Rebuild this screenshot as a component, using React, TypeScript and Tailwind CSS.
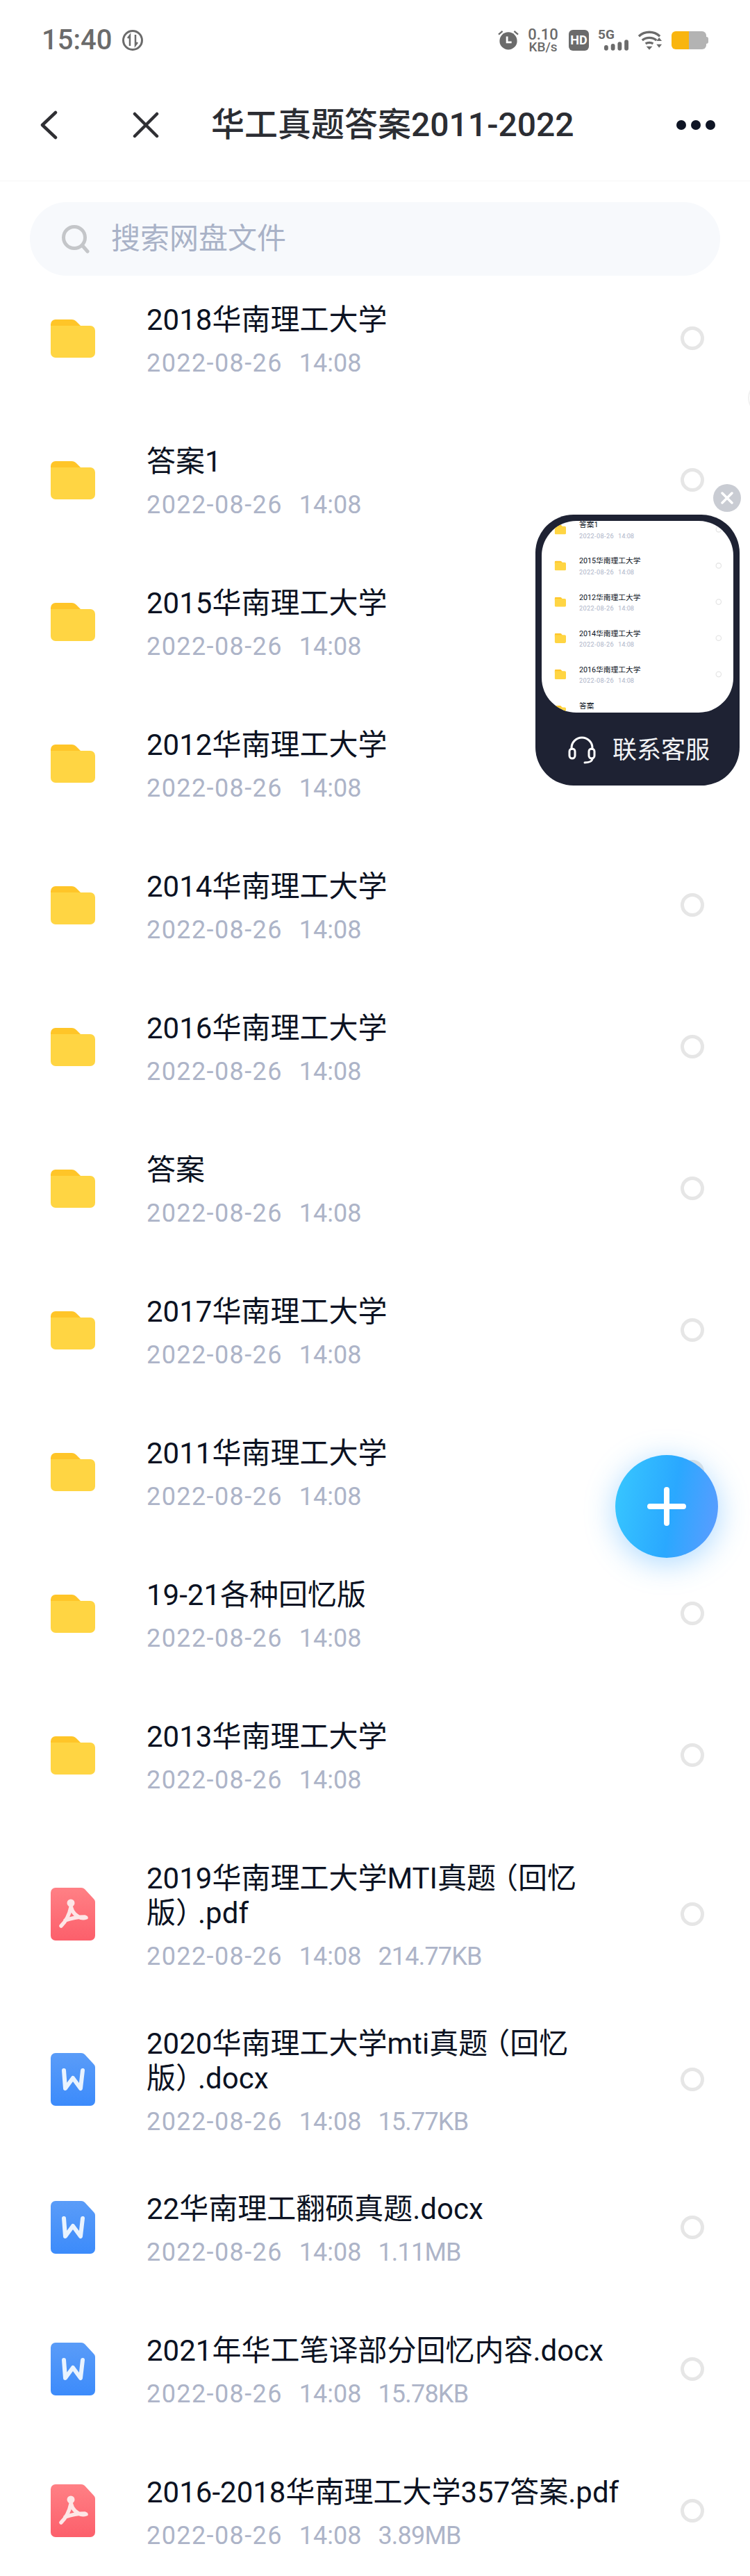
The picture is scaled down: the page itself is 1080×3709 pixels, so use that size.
const SANS = "font-['Roboto','Noto_Sans_CJK_SC',sans-serif]";

type Kind = "folder" | "pdf" | "word";

interface Item {
  kind: Kind;
  name: string;
  size?: string;
}

const items: Item[] = [
  { kind: "folder", name: "2018华南理工大学" },
  { kind: "folder", name: "答案1" },
  { kind: "folder", name: "2015华南理工大学" },
  { kind: "folder", name: "2012华南理工大学" },
  { kind: "folder", name: "2014华南理工大学" },
  { kind: "folder", name: "2016华南理工大学" },
  { kind: "folder", name: "答案" },
  { kind: "folder", name: "2017华南理工大学" },
  { kind: "folder", name: "2011华南理工大学" },
  { kind: "folder", name: "19-21各种回忆版" },
  { kind: "folder", name: "2013华南理工大学" },
  { kind: "pdf", name: "2019华南理工大学MTI真题（回忆\n版）.pdf", size: "214.77KB" },
  { kind: "word", name: "2020华南理工大学mti真题（回忆\n版）.docx", size: "15.77KB" },
  { kind: "word", name: "22华南理工翻硕真题.docx", size: "1.11MB" },
  { kind: "word", name: "2021年华工笔译部分回忆内容.docx", size: "15.78KB" },
  { kind: "pdf", name: "2016-2018华南理工大学357答案.pdf", size: "3.89MB" },
];

function FolderIcon() {
  return (
    <svg width="64" height="55" viewBox="0 0 64 55" className="shrink-0">
      <path d="M0 7a7 7 0 0 1 7-7h23c3 0 5 1 7 3l6 6v8H0z" fill="#ffc528" />
      <path d="M0 9h57a7 7 0 0 1 7 7v32a7 7 0 0 1-7 7H7a7 7 0 0 1-7-7z" fill="#ffd543" />
    </svg>
  );
}

function PdfIcon() {
  return (
    <svg width="64" height="76" viewBox="0 0 64 76" className="shrink-0">
      <defs>
        <linearGradient id="pdfFill" x1="0" y1="0" x2="0" y2="1">
          <stop offset="0" stopColor="#ff8085" />
          <stop offset="1" stopColor="#fc5f6b" />
        </linearGradient>
      </defs>
      <path
        d="M0 7a7 7 0 0 1 7-7h37c2 0 3.500.7 5 2l12 13c2 2 3 3.500 3 6v48a7 7 0 0 1-7 7H7a7 7 0 0 1-7-7z"
        fill="url(#pdfFill)"
      />
      <circle cx="29" cy="22" r="5.500" fill="#fde6e6" />
      <path
        d="M29 22c-1 8 4 16 11 20 4 2 8 2 11 1M29 28c-2 10-7 20-14 27M21 47c8-3 16-5 28-5"
        fill="none"
        stroke="#fde6e6"
        strokeWidth="5.500"
        strokeLinecap="round"
      />
    </svg>
  );
}

function WordIcon() {
  return (
    <svg width="64" height="76" viewBox="0 0 64 76" className="shrink-0">
      <defs>
        <linearGradient id="wordFill" x1="0" y1="0" x2="0" y2="1">
          <stop offset="0" stopColor="#5a9cf8" />
          <stop offset="1" stopColor="#3c8bfb" />
        </linearGradient>
      </defs>
      <path
        d="M0 7a7 7 0 0 1 7-7h37c2 0 3.500.7 5 2l12 13c2 2 3 3.500 3 6v48a7 7 0 0 1-7 7H7a7 7 0 0 1-7-7z"
        fill="url(#wordFill)"
      />
      <path
        d="M19 25l2 26 11-15 11 15 3-26"
        fill="none"
        stroke="#e9f3fe"
        strokeWidth="6"
        strokeLinecap="round"
        strokeLinejoin="round"
      />
    </svg>
  );
}

function FileName({ name }: { name: string }) {
  // the full-width brackets sit tighter in the reference font
  return (
    <div className="whitespace-pre-line text-[42px] leading-[50px] text-[#0b1222]">
      {name.split(/([（）])/).map((part, i) => {
        if (part === "（") return <span key={i} className="-ml-[10px]">{part}</span>;
        if (part === "）") return <span key={i} className="-mr-[10px]">{part}</span>;
        return part;
      })}
    </div>
  );
}

function FileRow({ item }: { item: Item }) {
  return (
    <div className="min-h-[204px] pb-[31px] pl-[73px] pr-[66px] pt-[48px]">
      <div className="flex items-center">
        <div className="mb-[7px] flex w-[138px] shrink-0 items-center">
          {item.kind === "folder" && <FolderIcon />}
          {item.kind === "pdf" && <PdfIcon />}
          {item.kind === "word" && <WordIcon />}
        </div>
        <div className="min-w-0 flex-1 pr-[70px]">
          <FileName name={item.name} />
          <div className="mt-[15px] flex gap-[24px] text-[36px] leading-[44px] text-[#adb4c8]">
            <span className="tracking-[1.4px]">2022-08-26</span>
            <span>14:08</span>
            {item.size && <span className="tracking-[-0.8px]">{item.size}</span>}
          </div>
        </div>
        <div className="mb-[7px] h-[34px] w-[34px] shrink-0 rounded-full border-[5px] border-[#e6e6e6]" />
      </div>
    </div>
  );
}

function StatusBar() {
  return (
    <div className="flex h-[116px] items-center pl-[60px] pr-[60px] text-[#6b6b6b]">
      <span className="text-[40px] font-medium leading-none">15:40</span>
      <svg width="30" height="30" viewBox="0 0 30 30" className="ml-[15px]">
        <circle cx="15" cy="15" r="13.500" fill="none" stroke="#6b6b6b" strokeWidth="3" />
        <path d="M11 23V8L8 12M19 7v15l3-4" fill="none" stroke="#6b6b6b" strokeWidth="2.500" />
      </svg>
      <div className="ml-auto flex items-center">
        <svg width="30" height="28" viewBox="0 0 32 30">
          <circle cx="16" cy="16" r="13.500" fill="#6b6b6b" />
          <path d="M14 9v9h7" fill="none" stroke="#fff" strokeWidth="3" />
          <path d="M1 6l6-5M31 6l-6-5" stroke="#6b6b6b" strokeWidth="2.500" />
        </svg>
        <div className="ml-[13px] flex w-[44px] flex-col items-center font-medium">
          <span className="text-[22px] leading-[19px]">0.10</span>
          <span className="text-[19px] leading-[17px]">KB/s</span>
        </div>
        <div className="ml-[15px] flex h-[30px] w-[29px] items-center justify-center rounded-[6px] bg-[#6b6b6b] text-[18px] font-bold leading-none text-white">
          HD
        </div>
        <div className="ml-[13px] flex h-[30px] w-[44px] flex-col">
          <span className="text-[19px] font-bold leading-[14px]">5G</span>
          <svg width="35" height="16" viewBox="0 0 36 16" className="ml-[9px]">
            <rect x="0" y="8" width="6" height="8" rx="3" fill="#6b6b6b" />
            <rect x="10" y="6" width="6" height="10" rx="3" fill="#6b6b6b" />
            <rect x="20" y="3" width="6" height="13" rx="3" fill="#6b6b6b" />
            <rect x="30" y="0" width="6" height="16" rx="3" fill="#6b6b6b" />
          </svg>
        </div>
        <svg width="37" height="28" viewBox="0 0 38 28" className="ml-[13px]">
          <path d="M2 8c9-8 22-8 31 0M7 14c6-5 15-5 21 0M12 19c3-2 8-2 11 0" fill="none" stroke="#6b6b6b" strokeWidth="3.500" />
          <path d="M13 23h9l-4.500 5zM28 15l4-5 4 5zM28 20h8l-4 5z" fill="#6b6b6b" />
        </svg>
        <div className="ml-[12px] flex items-center">
          <div className="flex h-[26px] w-[50px] overflow-hidden rounded-[6px]">
            <div className="w-[25px] bg-[#f9b50f]" />
            <div className="flex-1 bg-[#b3b3b3]" />
          </div>
          <div className="h-[10px] w-[3px] rounded-r-full bg-[#b3b3b3]" />
        </div>
      </div>
    </div>
  );
}

function TitleBar() {
  return (
    <div className="flex h-[145px] items-center border-b border-[#f7f7f7] pb-[17px]">
      <svg width="26" height="42" viewBox="0 0 26 42" className="ml-[57px]">
        <path d="M23 3L4 21l19 18" fill="none" stroke="#2f2f33" strokeWidth="4.500" strokeLinecap="round" strokeLinejoin="round" />
      </svg>
      <svg width="38" height="38" viewBox="0 0 38 38" className="ml-[108px]">
        <path d="M3 3l32 32M35 3L3 35" stroke="#2f2f33" strokeWidth="4.500" strokeLinecap="round" />
      </svg>
      <div className="ml-[75px] text-[48px] font-medium leading-none text-[#2b2d33]">华工真题答案2011-2022</div>
      <div className="ml-auto mr-[50px] flex gap-[7px]">
        <div className="h-[14px] w-[14px] rounded-full bg-[#0e1424]" />
        <div className="h-[14px] w-[14px] rounded-full bg-[#0e1424]" />
        <div className="h-[14px] w-[14px] rounded-full bg-[#0e1424]" />
      </div>
    </div>
  );
}

function ServiceCard() {
  return (
    <div className="absolute left-[771px] top-[741px] flex h-[390px] w-[294px] flex-col rounded-[55px] bg-[#1e2233] p-[9px]">
      <div className="h-[276px] w-[276px] shrink-0 overflow-hidden rounded-[50px] bg-white">
        <div className="mt-[-13px] w-[1080px] origin-top-left scale-[0.2556]">
          {items.slice(1, 8).map((item) => (
            <FileRow key={item.name} item={item} />
          ))}
        </div>
      </div>
      <div className="flex flex-1 items-center pl-[38px] pt-[12px]">
        <svg width="40" height="40" viewBox="0 0 40 40">
          <path d="M5 20v-3a15 15 0 0 1 30 0v3" fill="none" stroke="#fff" strokeWidth="3" />
          <rect x="2" y="18" width="8" height="14" rx="4" fill="none" stroke="#fff" strokeWidth="3" />
          <rect x="30" y="18" width="8" height="14" rx="4" fill="none" stroke="#fff" strokeWidth="3" />
          <path d="M35 32c0 4-5 6-11 6" fill="none" stroke="#fff" strokeWidth="3" strokeLinecap="round" />
        </svg>
        <span className="ml-[24px] text-[35px] leading-none text-[#f2f3f5]">联系客服</span>
      </div>
    </div>
  );
}

export default function App() {
  return (
    <div className={`relative h-[3709px] w-[1080px] overflow-hidden bg-white ${SANS}`}>
      <StatusBar />
      <TitleBar />
      <div className="px-[43px] pt-[30px]">
        <div className="flex h-[106px] items-center rounded-[53px] bg-[#f7f9fc] pl-[45px]">
          <svg width="42" height="42" viewBox="0 0 42 42">
            <circle cx="19" cy="19" r="15.500" fill="none" stroke="#c4c6c9" strokeWidth="5" />
            <path d="M31 31l7 8" stroke="#c4c6c9" strokeWidth="5" strokeLinecap="round" />
          </svg>
          <span className="ml-[30px] text-[42px] leading-none text-[#a9b2c7]">搜索网盘文件</span>
        </div>
      </div>
      <div className="-mt-[9px]">
        {items.map((item) => (
          <FileRow key={item.name} item={item} />
        ))}
      </div>
      <div className="absolute left-[1077px] top-[548px] h-[50px] w-[50px] rounded-full border-2 border-[#f1f1f1]" />
      <ServiceCard />
      <div className="absolute left-[1027px] top-[697px] flex h-[40px] w-[40px] items-center justify-center rounded-full bg-[#c9ccd3]">
        <svg width="18" height="18" viewBox="0 0 18 18">
          <path d="M2 2l14 14M16 2L2 16" stroke="#fff" strokeWidth="3.500" strokeLinecap="round" />
        </svg>
      </div>
      <div className="absolute left-[886px] top-[2095px] flex h-[148px] w-[148px] items-center justify-center rounded-full bg-[linear-gradient(100deg,#38c8ff_0%,#2aa8ff_55%,#5f9bff_100%)] shadow-[0_8px_44px_rgba(48,160,255,0.4)]">
        <svg width="56" height="56" viewBox="0 0 56 56">
          <path d="M28 4v48M4 28h48" stroke="#fff" strokeWidth="8" strokeLinecap="round" />
        </svg>
      </div>
    </div>
  );
}
